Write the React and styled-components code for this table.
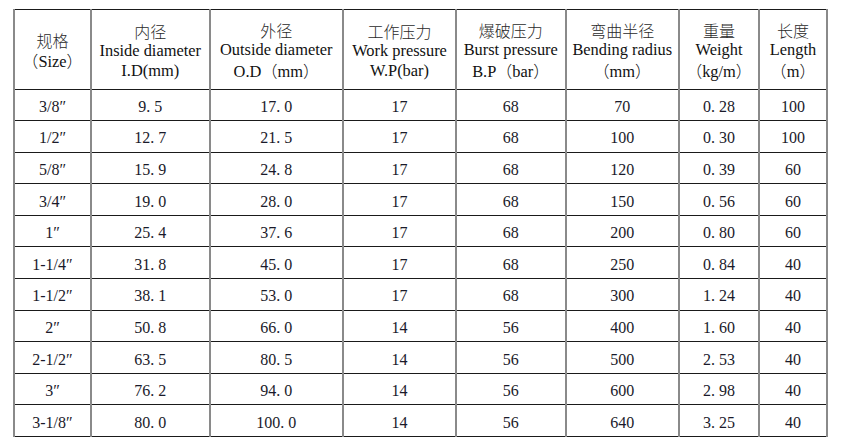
import React from 'react';
import styled, { createGlobalStyle } from 'styled-components';

const GlobalStyle = createGlobalStyle`
  html, body {
    margin: 0;
    padding: 0;
    background: #fff;
  }
  body {
    font-family: "Liberation Serif", "Times New Roman", serif;
    color: #111;
  }
`;

const columns = [
  { cn: '规格', en: null, unit: '（Size）', width: 77 },
  { cn: '内径', en: 'Inside diameter', unit: 'I.D(mm)', width: 118.5 },
  { cn: '外径', en: 'Outside diameter', unit: 'O.D（mm）', width: 133.5 },
  { cn: '工作压力', en: 'Work pressure', unit: 'W.P(bar)', width: 113 },
  { cn: '爆破压力', en: 'Burst pressure', unit: 'B.P（bar）', width: 109.5 },
  { cn: '弯曲半径', en: 'Bending radius', unit: '（mm）', width: 113.5 },
  { cn: '重量', en: 'Weight', unit: '（kg/m）', width: 80 },
  { cn: '长度', en: 'Length', unit: '（m）', width: 68 },
];

const rows = [
  ['3/8″', '9.5', '17.0', '17', '68', '70', '0.28', '100'],
  ['1/2″', '12.7', '21.5', '17', '68', '100', '0.30', '100'],
  ['5/8″', '15.9', '24.8', '17', '68', '120', '0.39', '60'],
  ['3/4″', '19.0', '28.0', '17', '68', '150', '0.56', '60'],
  ['1″', '25.4', '37.6', '17', '68', '200', '0.80', '60'],
  ['1-1/4″', '31.8', '45.0', '17', '68', '250', '0.84', '40'],
  ['1-1/2″', '38.1', '53.0', '17', '68', '300', '1.24', '40'],
  ['2″', '50.8', '66.0', '14', '56', '400', '1.60', '40'],
  ['2-1/2″', '63.5', '80.5', '14', '56', '500', '2.53', '40'],
  ['3″', '76.2', '94.0', '14', '56', '600', '2.98', '40'],
  ['3-1/8″', '80.0', '100.0', '14', '56', '640', '3.25', '40'],
];

// columns printed with the wide (full-cell) decimal point
const wideDot = [1, 2, 6];

const Table = styled.table`
  margin: 9px 0 0 13px;
  border-collapse: collapse;
  table-layout: fixed;
  width: 815px;
  font-size: 16px;
`;

const HeadCell = styled.th`
  height: 79.5px;
  padding: 4px 0 0;
  box-sizing: border-box;
  font-weight: normal;
  text-align: center;
  vertical-align: middle;
  line-height: 20px;
  border-top: 1px solid #1a1a1a;
  border-bottom: 1px solid #1a1a1a;
  border-left: 2px solid #8a8a8a;
  border-right: 2px solid #8a8a8a;
  white-space: nowrap;
`;

const Line = styled.div`
  font-size: ${p => (p.$cn ? '16px' : '16.4px')};
  font-family: ${p =>
    p.$cn
      ? '"Noto Sans CJK SC", sans-serif'
      : '"Liberation Serif", "Noto Sans CJK SC", serif'};
  font-weight: ${p => (p.$cn ? 300 : 400)};
  color: ${p => (p.$cn ? '#2a2a2a' : '#111')};
`;

const Paren = styled.span`
  font-family: "Noto Sans CJK SC", sans-serif;
  font-weight: 300;
  font-size: 16px;
`;

const Cell = styled.td`
  height: 31.6px;
  padding: 4px 0 0;
  box-sizing: border-box;
  text-align: center;
  vertical-align: middle;
  line-height: 20px;
  border-top: 1px solid #1a1a1a;
  border-bottom: 1px solid #1a1a1a;
  border-left: 2px solid #8a8a8a;
  border-right: 2px solid #8a8a8a;
  white-space: nowrap;
  color: #1a1a2a;
`;

const Dot = styled.span`
  display: inline-block;
  width: 0.5em;
  text-align: left;
`;

function WideNumber({ value }) {
  const [whole, frac] = value.split('.');
  return (
    <>
      {whole}
      <Dot>.</Dot>
      {frac}
    </>
  );
}

// full-width brackets need the CJK face to keep their width
function Unit({ text }) {
  return text
    .split(/([（）])/)
    .filter(Boolean)
    .map((part, i) =>
      part === '（' || part === '）' ? <Paren key={i}>{part}</Paren> : part
    );
}

export default function App() {
  return (
    <>
      <GlobalStyle />
      <Table>
        <colgroup>
          {columns.map((c, i) => (
            <col key={i} style={{ width: c.width }} />
          ))}
        </colgroup>
        <thead>
          <tr>
            {columns.map((c, i) => (
              <HeadCell key={i}>
                <Line $cn>{c.cn}</Line>
                {c.en && <Line>{c.en}</Line>}
                <Line>
                  <Unit text={c.unit} />
                </Line>
              </HeadCell>
            ))}
          </tr>
        </thead>
        <tbody>
          {rows.map((r, ri) => (
            <tr key={ri}>
              {r.map((v, ci) => (
                <Cell key={ci}>
                  {wideDot.includes(ci) ? <WideNumber value={v} /> : v}
                </Cell>
              ))}
            </tr>
          ))}
        </tbody>
      </Table>
    </>
  );
}
